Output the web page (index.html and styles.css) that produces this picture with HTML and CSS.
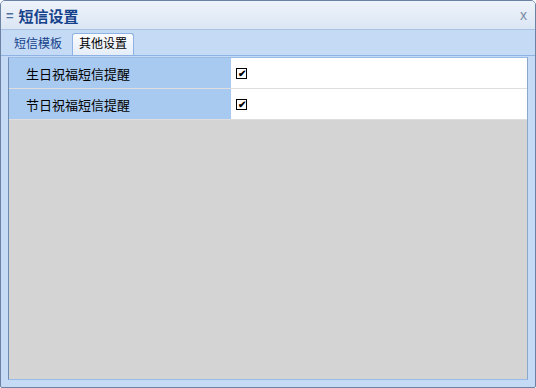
FILE: index.html
```html
<!DOCTYPE html>
<html lang="zh-CN">
<head>
    <meta charset="UTF-8">
    <title>短信设置</title>
    <link rel="stylesheet" href="styles.css">
</head>
<body>
    <div class="window">
        <div class="title-bar">
            <span class="title-icon">=</span>
            <span class="title">短信设置</span>
            <span class="close">x</span>
        </div>
        <div class="tabs">
            <span class="tab">短信模板</span>
            <span class="tab active">其他设置</span>
        </div>
        <div class="panel">
            <div class="row">
                <div class="label">生日祝福短信提醒</div>
                <div class="value"><span class="check">✔</span></div>
            </div>
            <div class="row">
                <div class="label">节日祝福短信提醒</div>
                <div class="value"><span class="check">✔</span></div>
            </div>
        </div>
    </div>
</body>
</html>
```

FILE: styles.css
```css
body {
    margin: 0;
    padding: 0;
    font-family: "Liberation Sans", "Noto Sans CJK SC", sans-serif;
    font-size: 12px;
}
.window {
    width: 536px;
    height: 388px;
    box-sizing: border-box;
    border: 1px solid #6b82a3;
    border-radius: 5px 5px 2px 2px;
    background-color: #c4daf5;
    display: flex;
    flex-direction: column;
    overflow: hidden;
}
.title-bar {
    height: 28px;
    display: flex;
    align-items: center;
    padding: 0 8px 0 5px;
    background: linear-gradient(#eef3fa, #dbe6f4);
    border-bottom: 1px solid #a9c2e2;
}
.title-icon {
    color: #4f6f9c;
    font-weight: bold;
    font-size: 13px;
    margin-right: 5px;
}
.title {
    color: #15428b;
    font-weight: 600;
    font-size: 15px;
    flex: 1;
}
.close {
    color: #7a8ba3;
    font-size: 14px;
}
.tabs {
    height: 25px;
    display: flex;
    align-items: flex-end;
    padding: 0 0 0 6px;
    border-bottom: 1px solid #8db2e3;
    background-color: #c4daf5;
}
.tab {
    height: 21px;
    line-height: 21px;
    padding: 0 7px;
    margin-right: 3px;
    color: #15428b;
    font-size: 12px;
}
.tab.active {
    background: linear-gradient(#fbfcfe, #e4edf8);
    border: 1px solid #8db2e3;
    border-bottom: none;
    border-radius: 3px 3px 0 0;
    color: #000;
    padding: 0 6px;
}
.panel {
    flex: 1;
    margin: 1px 7px 7px 7px;
    border: 1px solid #99bbe8;
    border-left-color: #6f8bb0;
    border-right-color: #8aa6c9;
    background-color: #d4d4d4;
}
.row {
    display: flex;
    height: 30px;
    border-bottom: 1px solid #dedede;
}
.label {
    width: 205px;
    padding-left: 17px;
    background-color: #a9caf0;
    display: flex;
    align-items: center;
    font-size: 13px;
    color: #000;
}
.value {
    flex: 1;
    background-color: #fff;
    display: flex;
    align-items: center;
    padding-left: 5px;
}
.check {
    width: 9px;
    height: 9px;
    border: 1px solid #000;
    font-size: 10px;
    line-height: 9px;
    text-align: center;
    font-weight: bold;
}
```
